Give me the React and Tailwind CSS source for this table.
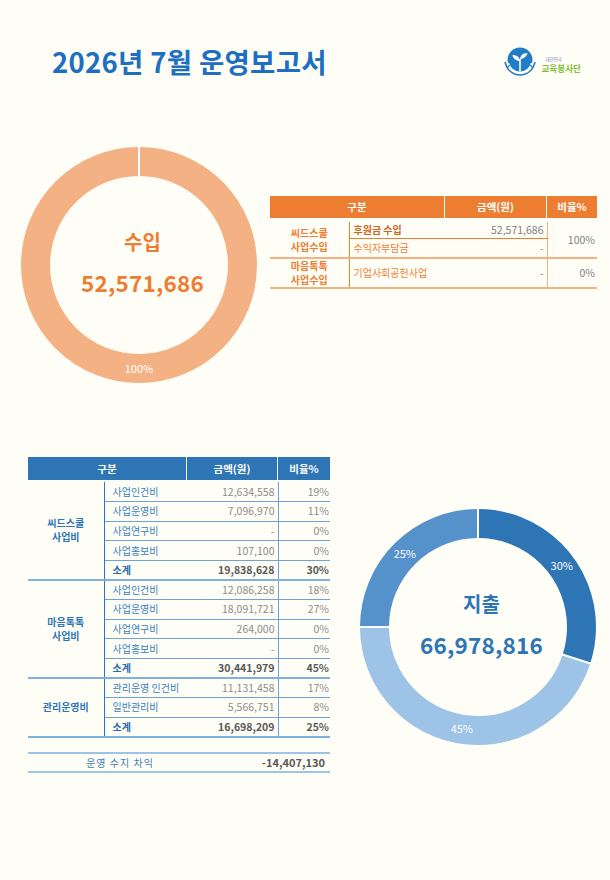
import React from 'react';

const C = 2 * Math.PI * 103.5;

// expense split, clockwise from 12 o'clock
const expenseSlices = [
  { pct: 30, color: '#2E75B6' },
  { pct: 45, color: '#9DC3E6' },
  { pct: 25, color: '#5591CA' },
];

const expenseRows = [
  {
    group: ['씨드스쿨', '사업비'],
    rows: [
      { name: '사업인건비', amount: '12,634,558', pct: '19%' },
      { name: '사업운영비', amount: '7,096,970', pct: '11%' },
      { name: '사업연구비', amount: '-', pct: '0%' },
      { name: '사업홍보비', amount: '107,100', pct: '0%' },
      { name: '소계', amount: '19,838,628', pct: '30%', total: true },
    ],
  },
  {
    group: ['마음톡톡', '사업비'],
    rows: [
      { name: '사업인건비', amount: '12,086,258', pct: '18%' },
      { name: '사업운영비', amount: '18,091,721', pct: '27%' },
      { name: '사업연구비', amount: '264,000', pct: '0%' },
      { name: '사업홍보비', amount: '-', pct: '0%' },
      { name: '소계', amount: '30,441,979', pct: '45%', total: true },
    ],
  },
  {
    group: ['관리운영비'],
    rows: [
      { name: '관리운영 인건비', amount: '11,131,458', pct: '17%' },
      { name: '일반관리비', amount: '5,566,751', pct: '8%' },
      { name: '소계', amount: '16,698,209', pct: '25%', total: true },
    ],
  },
];

function polar(deg, r) {
  const a = ((deg - 90) * Math.PI) / 180;
  return [120 + r * Math.cos(a), 120 + r * Math.sin(a)];
}

function Donut({ slices, title, value, textColor }) {
  let start = 0;
  const parts = slices.map((s) => {
    const len = (s.pct / 100) * C;
    const p = { ...s, len, offset: start, startDeg: (start / C) * 360, midDeg: ((start + len / 2) / C) * 360 };
    start += len;
    return p;
  });

  return (
    <div className="relative w-[240px] h-[240px] shrink-0">
      <svg width="240" height="240" viewBox="0 0 240 240">
        {parts.map((p, i) => (
          <circle
            key={i}
            cx="120"
            cy="120"
            r="103.5"
            fill="none"
            stroke={p.color}
            strokeWidth="29"
            strokeDasharray={`${p.len} ${C}`}
            strokeDashoffset={-p.offset}
            transform="rotate(-90 120 120)"
          />
        ))}
        {parts.map((p, i) => {
          const [x1, y1] = polar(p.startDeg, 88);
          const [x2, y2] = polar(p.startDeg, 119);
          return <line key={'s' + i} x1={x1} y1={y1} x2={x2} y2={y2} stroke="#ffffff" strokeWidth="2" />;
        })}
        {parts.map((p, i) => {
          const [x, y] = polar(p.midDeg, 103.5);
          return (
            <text
              key={'t' + i}
              x={x}
              y={y + 4}
              textAnchor="middle"
              fill="#ffffff"
              fontSize="11"
              fontFamily="'Noto Sans CJK KR', sans-serif"
            >
              {p.pct}%
            </text>
          );
        })}
      </svg>
      <div className={`absolute inset-0 flex flex-col items-center justify-center gap-[19px] pb-[4px] pl-[7px] font-bold leading-none ${textColor}`}>
        <span className="text-[20px]">{title}</span>
        <span className="text-[22.5px] tracking-[0.2px]">{value}</span>
      </div>
    </div>
  );
}

function Logo() {
  return (
    <div className="flex items-center gap-[3px]">
      <svg width="36" height="30" viewBox="0 0 36 30">
        <circle cx="18" cy="13" r="12.5" fill="#1F7DC8" />
        <path d="M18 24 V12" stroke="#fff" strokeWidth="1.6" fill="none" />
        <path d="M18 14 C14 14 11 11.5 10.5 8 C14.5 8 17.5 10 18 14Z" fill="#fff" />
        <path d="M18 12 C21.5 12 24.5 9.5 25.5 6 C21.5 6 18.5 8 18 12Z" fill="#fff" />
        <path d="M6 16 C8 22 12 25.5 18 25.5 C24 25.5 28 22 30 16" stroke="#fff" strokeWidth="2.2" fill="none" />
        <path d="M3 15 C5 23 10.5 28 18 28 C25.5 28 31 23 33 15" stroke="#1F7DC8" strokeWidth="1.6" fill="none" />
        <path d="M8 18 L5 21 M28 18 L31 21" stroke="#1F7DC8" strokeWidth="1.2" />
      </svg>
      <div className="flex flex-col leading-none pt-[6px]">
        <span className="text-[4.5px] text-[#5f86b0] pl-[4px] mb-[2px]">대한민국</span>
        <span className="text-[8.6px] font-bold text-[#86BF40]">교육봉사단</span>
      </div>
    </div>
  );
}

function IncomeTable() {
  return (
    <div className="w-[327px] mt-[51px]">
      <div className="flex h-[22px] gap-px text-white text-[10.5px] font-bold">
        <div className="w-[174px] bg-[#ED7D31] flex items-center justify-center">구분</div>
        <div className="w-[101px] bg-[#ED7D31] flex items-center justify-center">금액(원)</div>
        <div className="flex-1 bg-[#ED7D31] flex items-center justify-center">비율%</div>
      </div>
      <table className="mt-[4px] w-full table-fixed border-collapse text-[10px] leading-[12px]">
        <colgroup>
          <col className="w-[79px]" />
          <col className="w-[96px]" />
          <col className="w-[102px]" />
          <col className="w-[50px]" />
        </colgroup>
        <tbody>
          <tr className="h-[16px]">
            <td rowSpan={2} className="border-r border-r-[#ED7D31] border-b-2 border-b-[#F4B183] text-center font-bold text-[#ED7D31]">
              <div className="leading-[14px]">씨드스쿨</div>
              <div className="leading-[14px]">사업수입</div>
            </td>
            <td className="border-b border-b-[#ED7D31] pl-[4px] font-bold text-[#D0641C]">후원금 수입</td>
            <td className="border-b border-b-[#ED7D31] text-right pr-[3px] text-[#7F7F7F] text-[10.5px]">52,571,686</td>
            <td rowSpan={2} className="border-l border-l-[#F4B183] border-b-2 border-b-[#F4B183] text-right pr-[2px] text-[#7F7F7F] text-[10.5px]">100%</td>
          </tr>
          <tr className="h-[20px]">
            <td className="border-b-2 border-b-[#F4B183] pl-[4px] text-[#ED7D31]">수익자부담금</td>
            <td className="border-b-2 border-b-[#F4B183] text-right pr-[3px] text-[#7F7F7F]">-</td>
          </tr>
          <tr className="h-[30px]">
            <td className="border-r border-r-[#ED7D31] border-b-2 border-b-[#F4B183] text-center font-bold text-[#ED7D31]">
              <div className="leading-[14px]">마음톡톡</div>
              <div className="leading-[14px]">사업수입</div>
            </td>
            <td className="border-b-2 border-b-[#F4B183] pl-[4px] text-[#ED7D31]">기업사회공헌사업</td>
            <td className="border-b-2 border-b-[#F4B183] text-right pr-[3px] text-[#7F7F7F]">-</td>
            <td className="border-l border-l-[#F4B183] border-b-2 border-b-[#F4B183] text-right pr-[2px] text-[#7F7F7F] text-[10.5px]">0%</td>
          </tr>
        </tbody>
      </table>
    </div>
  );
}

function ExpenseTable() {
  return (
    <div className="w-[302px] shrink-0">
      <div className="flex h-[23px] gap-px text-white text-[10.5px] font-bold">
        <div className="w-[158px] bg-[#2E75B6] flex items-center justify-center">구분</div>
        <div className="w-[90px] bg-[#2E75B6] flex items-center justify-center">금액(원)</div>
        <div className="flex-1 bg-[#2E75B6] flex items-center justify-center">비율%</div>
      </div>
      <table className="mt-[2px] w-full table-fixed border-collapse text-[10px] leading-[12px]">
        <colgroup>
          <col className="w-[76px]" />
          <col className="w-[96px]" />
          <col className="w-[78px]" />
          <col className="w-[52px]" />
        </colgroup>
        <tbody>
          {expenseRows.map((g, gi) =>
            g.rows.map((r, ri) => {
              const last = ri === g.rows.length - 1;
              const line = last ? 'border-b-2 border-b-[#7FB0DE]' : 'border-b border-b-[#6FA3D6]';
              return (
                <tr key={gi + '-' + ri} className="h-[19.6px]">
                  {ri === 0 && (
                    <td rowSpan={g.rows.length} className="border-r border-r-[#2E75B6] border-b-2 border-b-[#7FB0DE] text-center font-bold text-[#2E75B6]">
                      {g.group.map((t, i) => (
                        <div key={i} className="leading-[14px]">{t}</div>
                      ))}
                    </td>
                  )}
                  <td className={`${line} pl-[8px] whitespace-nowrap ${r.total ? 'font-bold text-[#2A6DAE]' : 'text-[#3A80C0]'}`}>{r.name}</td>
                  <td className={`${line} text-right pr-[3px] text-[10.5px] ${r.total ? 'font-bold text-[#595959]' : 'text-[#8C8C8C]'}`}>{r.amount}</td>
                  <td className={`${line} border-l border-l-[#6FA3D6] text-right pr-[1px] text-[10.5px] ${r.total ? 'font-bold text-[#595959]' : 'text-[#8C8C8C]'}`}>{r.pct}</td>
                </tr>
              );
            })
          )}
        </tbody>
      </table>
      <div className="mt-[14px] h-[21px] flex items-center border-y-2 border-[#9DC3E6]">
        <div className="w-[184px] text-center text-[10px] text-[#3A80C0] tracking-[1px]">운영 수지 차익</div>
        <div className="flex-1 text-right pr-[5px] text-[11px] font-bold text-[#595959]">-14,407,130</div>
      </div>
    </div>
  );
}

export default function App() {
  return (
    <div className="w-[610px] h-[880px] overflow-hidden bg-[#FFFEF6] font-['Noto_Sans_CJK_KR',sans-serif]">
      <header className="flex items-center justify-between pl-[52px] pr-[29px] pt-[38px] h-[86px]">
        <h1 className="text-[27.5px] font-bold text-[#1C6FC1] tracking-[0.3px] leading-none">2026년 7월 운영보고서</h1>
        <Logo />
      </header>

      <section className="flex items-start pl-[19px] mt-[59px]">
        <Donut slices={[{ pct: 100, color: '#F4B183' }]} title="수입" value="52,571,686" textColor="text-[#ED7D31]" />
        <div className="ml-[11px]">
          <IncomeTable />
        </div>
      </section>

      <section className="flex items-start pl-[28px] mt-[72px]">
        <ExpenseTable />
        <div className="ml-[28px] mt-[50px]">
          <Donut slices={expenseSlices} title="지출" value="66,978,816" textColor="text-[#2E75B6]" />
        </div>
      </section>
    </div>
  );
}
